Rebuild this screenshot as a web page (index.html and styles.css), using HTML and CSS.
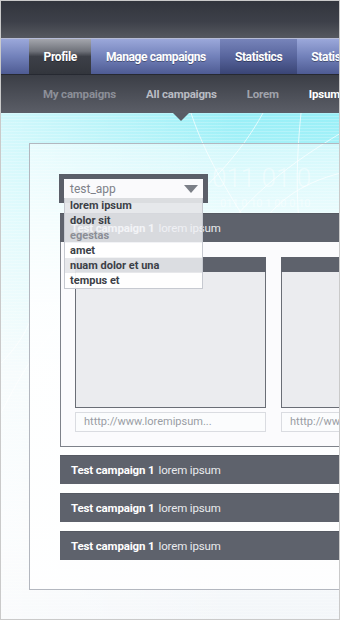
FILE: index.html
```html
<!DOCTYPE html>
<html lang="en">
<head>
<meta charset="utf-8">
<title>Campaigns</title>
<link rel="stylesheet" href="styles.css">
</head>
<body>
<div class="frame">
  <header class="topbar"></header>
  <nav class="mainnav">
    <span class="filler"></span>
    <a class="tab active">Profile</a>
    <a class="tab">Manage campaigns</a>
    <a class="tab dark">Statistics</a>
    <a class="tab">Statistics</a>
  </nav>
  <nav class="subnav">
    <a class="sub">My campaigns</a>
    <a class="sub current">All campaigns</a>
    <a class="sub mid">Lorem</a>
    <a class="sub bright">Ipsum</a>
  </nav>
  <main class="content">
    <svg class="deco" width="340" height="510" viewBox="0 0 340 510" aria-hidden="true">
      <g fill="none" stroke="#ffffff" stroke-width="1" stroke-opacity="0.7">
        <path d="M262 0 C240 40 205 80 150 118"/>
        <path d="M300 0 C296 40 294 80 300 130"/>
        <path d="M340 20 C290 50 250 80 215 128"/>
        <path d="M190 0 C200 30 215 60 240 100"/>
        <path d="M340 60 C300 70 270 90 250 128"/>
        <path d="M0 300 C20 260 40 230 60 210"/>
        <path d="M0 250 C15 235 25 220 30 205"/>
      </g>
      <text class="digits-big" x="211" y="74">011 01 0</text>
      <text class="digits-small" x="219" y="94">011 0 10 1 00 0 10</text>
    </svg>
    <section class="panel">
      <div class="picker">
        <div class="select"><span>test_app</span><i class="caret"></i></div>
        <ul class="menu">
          <li class="shade">lorem ipsum</li>
          <li class="shade2">dolor sit</li>
          <li class="shade2 muted">egestas</li>
          <li>amet</li>
          <li class="shade">nuam dolor et una</li>
          <li>tempus et</li>
        </ul>
      </div>
      <div class="campaign">
        <div class="bar"><b>Test campaign 1</b> lorem ipsum</div>
        <div class="camp-body">
          <div class="card">
            <div class="card-head"></div>
            <div class="card-img"></div>
            <div class="url">htttp://www.loremipsum...</div>
          </div>
          <div class="card">
            <div class="card-head"></div>
            <div class="card-img"></div>
            <div class="url">htttp://www.loremipsum...</div>
          </div>
        </div>
      </div>
      <div class="bar first"><b>Test campaign 1</b> lorem ipsum</div>
      <div class="bar"><b>Test campaign 1</b> lorem ipsum</div>
      <div class="bar"><b>Test campaign 1</b> lorem ipsum</div>
    </section>
  </main>
</div>
</body>
</html>
```

FILE: styles.css
```css
html, body {
  margin: 0;
  padding: 0;
  background: #ffffff;
}

body {
  font-family: Roboto, "Liberation Sans", sans-serif;
}

.frame {
  width: 340px;
  height: 620px;
  box-sizing: border-box;
  border: 1px solid #cacaca;
  overflow: hidden;
  display: flex;
  flex-direction: column;
  background: #ffffff;
}

.topbar {
  flex: none;
  height: 37px;
  background: linear-gradient(#32353d, #3d4049 55%, #55585f);
}

.mainnav {
  flex: none;
  height: 37px;
  box-sizing: border-box;
  border-top: 1px solid #b6bcd6;
  border-bottom: 1px solid #262931;
  display: flex;
  white-space: nowrap;
  background: linear-gradient(#9ba8da, #7281ba 50%, #4e5b93);
}

.filler {
  flex: none;
  width: 28px;
}

.tab {
  flex: none;
  display: flex;
  align-items: center;
  padding: 0 14.5px;
  color: #ffffff;
  font-size: 12px;
  font-weight: 700;
  letter-spacing: -0.35px;
  text-shadow: 0 1px 0 rgba(0, 0, 0, 0.35);
}

.tab.active {
  background: linear-gradient(#a4a6ad, #6f727a 35%, #3d4048 50%, #33363d);
}

.tab.dark {
  background: linear-gradient(#7784ba, #58659d 50%, #3a4575);
}

.subnav {
  flex: none;
  position: relative;
  z-index: 2;
  height: 38px;
  display: flex;
  align-items: center;
  gap: 30px;
  padding-left: 42px;
  white-space: nowrap;
  background: linear-gradient(#3b3e46, #5b5e67);
}

.sub {
  position: relative;
  height: 100%;
  display: flex;
  align-items: center;
  color: #8c8f98;
  font-size: 11.5px;
  font-weight: 700;
  letter-spacing: -0.2px;
}

.sub.current {
  color: #b9bcc3;
}

.sub.current::after {
  content: "";
  position: absolute;
  left: 50%;
  bottom: -8px;
  margin-left: -8px;
  border-left: 8px solid transparent;
  border-right: 8px solid transparent;
  border-top: 8px solid #595c65;
}

.sub.mid {
  color: #a0a3ab;
}

.sub.bright {
  color: #ffffff;
}

.content {
  flex: 1;
  position: relative;
  padding: 30px 0 0 28px;
  background:
    repeating-linear-gradient(to bottom, rgba(255, 255, 255, 0.22) 0 1px, rgba(255, 255, 255, 0) 1px 3px),
    linear-gradient(to right, rgba(255, 255, 255, 0.55), rgba(255, 255, 255, 0) 70%),
    linear-gradient(to bottom, #98eff7 0, #c4f6fa 110px, #eef9fb 260px, #f7fafc 420px, #f3f6f9 510px);
}

.deco {
  position: absolute;
  left: 0;
  top: 0;
  pointer-events: none;
}

.digits-big {
  font-family: Roboto, sans-serif;
  font-weight: 300;
  font-size: 26px;
  fill: #ffffff;
  fill-opacity: 0.45;
}

.digits-small {
  font-family: Roboto, sans-serif;
  font-size: 11px;
  fill: #ffffff;
  fill-opacity: 0.45;
}

.panel {
  position: relative;
  width: 430px;
  box-sizing: border-box;
  border: 1px solid #b3b7bf;
  padding: 30px 0 29px 30px;
  background: linear-gradient(rgba(255, 255, 255, 0.5), rgba(255, 255, 255, 0.88) 160px, rgba(255, 255, 255, 0.85));
}

.picker {
  position: relative;
  z-index: 3;
  width: 149px;
  box-sizing: border-box;
  margin-left: -1px;
  padding: 5px;
  background: #5b5f69;
}

.select {
  height: 19px;
  display: flex;
  align-items: center;
  justify-content: space-between;
  padding: 0 5px 0 6px;
  background: #fafafc;
  color: #7e8189;
  font-size: 12px;
}

.caret {
  display: block;
  width: 0;
  height: 0;
  border-left: 7px solid transparent;
  border-right: 7px solid transparent;
  border-top: 8px solid #7b7f87;
}

.menu {
  position: absolute;
  left: 5px;
  top: 24px;
  width: 139px;
  box-sizing: border-box;
  margin: 0;
  padding: 0;
  list-style: none;
  border: 1px solid #c6c9d0;
  border-top: none;
}

.menu li {
  height: 15px;
  line-height: 15px;
  padding-left: 5px;
  color: #3c3f47;
  font-size: 11px;
  font-weight: 700;
  background: rgba(255, 255, 255, 0.93);
}

.menu li.shade {
  background: rgba(229, 230, 234, 0.93);
}

.menu li.shade2 {
  background: rgba(240, 241, 244, 0.84);
}

.menu li.muted {
  color: #8b8e96;
}

.campaign {
  margin-top: 10px;
}

.bar {
  height: 29px;
  box-sizing: border-box;
  display: flex;
  align-items: center;
  padding-left: 11px;
  background: #5e626c;
  border-top: 1px solid #555962;
  color: #e9ebee;
  font-size: 11.5px;
  letter-spacing: -0.15px;
  white-space: nowrap;
}

.bar b {
  color: #ffffff;
  margin-right: 4px;
}

.bar.first {
  margin-top: 8px;
}

.bar + .bar {
  margin-top: 9px;
}

.camp-body {
  display: flex;
  gap: 15px;
  padding: 15px 0 14px 14px;
  border: 1px solid #7e828a;
  border-top: none;
  background: #fbfbfd;
}

.card {
  flex: none;
  width: 191px;
}

.card-head {
  height: 15px;
  background: #5e626c;
}

.card-img {
  height: 136px;
  box-sizing: border-box;
  background: #ebecef;
  border: 1px solid #6a6e76;
  border-top: none;
}

.url {
  margin-top: 4px;
  height: 20px;
  box-sizing: border-box;
  padding-left: 8px;
  border: 1px solid #dadce1;
  background: #fbfcfd;
  color: #999ca4;
  font-size: 11px;
  line-height: 18px;
  white-space: nowrap;
  overflow: hidden;
}
```
